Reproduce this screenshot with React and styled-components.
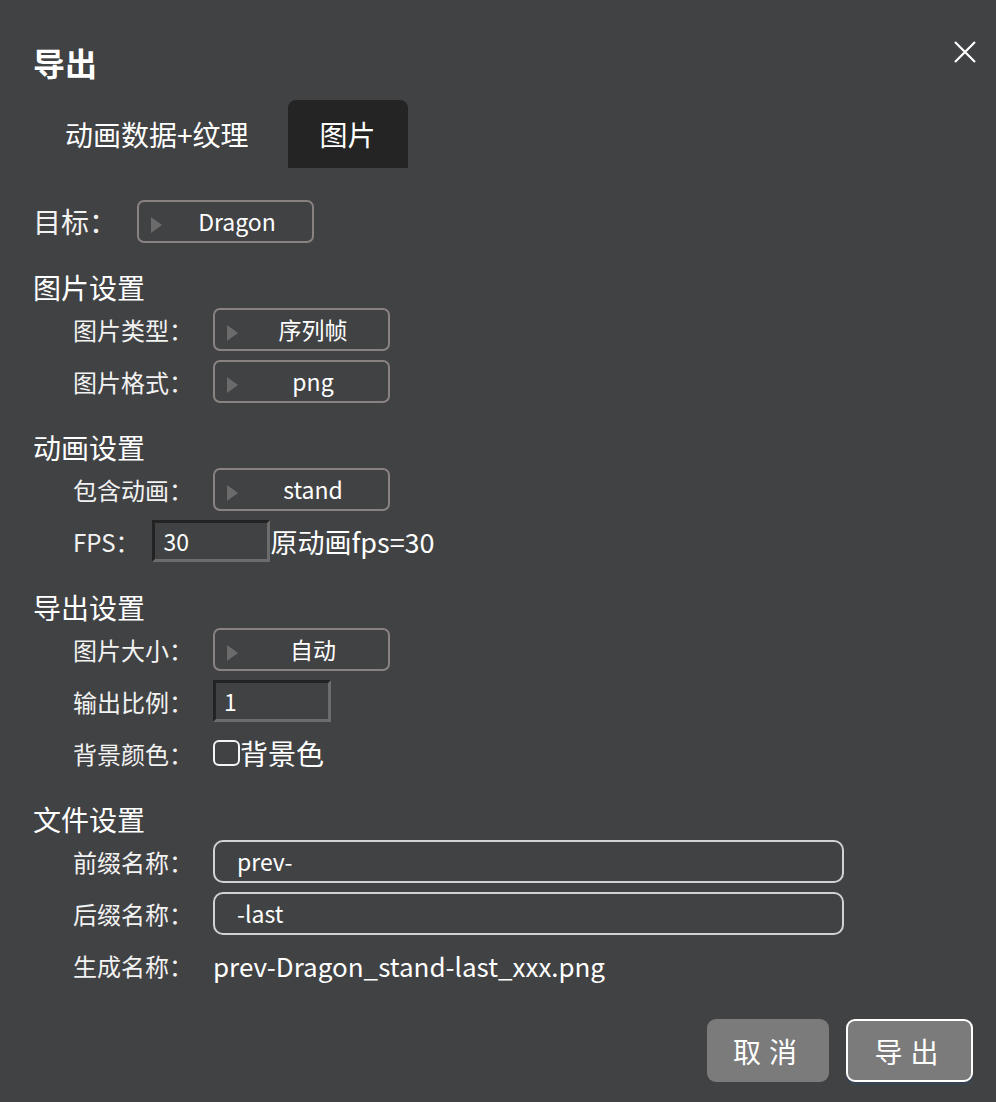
import React from 'react';
import styled, { createGlobalStyle } from 'styled-components';

const GlobalStyle = createGlobalStyle`
  html, body {
    margin: 0;
    padding: 0;
    background: #414244;
  }
  * { box-sizing: border-box; }
`

const font = `"Noto Sans CJK SC", "Noto Sans", sans-serif`

const Dialog = styled.div`
  width: 996px;
  min-height: 1102px;
  background: #414244;
  color: #fff;
  font-family: ${font};
  padding: 40px 19px 0 33px;
`
const TitleBar = styled.div`
  display: flex;
  justify-content: space-between;
  align-items: flex-start;
  height: 44px;
`
const Title = styled.h1`
  margin: 0;
  font-size: 32px;
  font-weight: 700;
  line-height: 44px;
`
const Close = styled.button`
  border: 0;
  background: none;
  padding: 0;
  width: 24px;
  height: 24px;
  cursor: pointer;
`
const Tabs = styled.div`
  display: flex;
  gap: 7px;
  margin-top: 16px;
  height: 68px;
`
const Tab = styled.div`
  display: flex;
  align-items: center;
  padding: 0 32px;
  font-size: 28px;
  border-radius: 8px 8px 0 0;
  background: ${p => (p.$active ? '#242424' : 'transparent')};
`
const Row = styled.div`
  display: flex;
  align-items: center;
  gap: 20px;
  height: 52px;
  padding-left: ${p => (p.$top ? 0 : 40)}px;
  margin-top: ${p => p.$mt || 0}px;
`
const Label = styled.span`
  font-size: ${p => (p.$big ? 28 : 24)}px;
  color: #f2f2f2;
  white-space: nowrap;
  margin-right: ${p => (p.$tight ? -7 : 0)}px;
`
const Section = styled.div`
  margin-top: 24px;
`
const Header = styled.div`
  height: 32px;
  line-height: 32px;
  font-size: 28px;
`
const Select = styled.div`
  width: 177px;
  height: 43px;
  border: 2px solid #8a8282;
  border-radius: 7px;
  display: flex;
  align-items: center;
  padding-left: 12px;
  font-size: 23px;
`
const Arrow = styled.span`
  width: 0;
  height: 0;
  margin-top: 8px;
  border-top: 8px solid transparent;
  border-bottom: 8px solid transparent;
  border-left: 11px solid #6b6b6b;
`
const SelectText = styled.span`
  flex: 1;
  text-align: center;
`
const NumInput = styled.div`
  width: 118px;
  height: 42px;
  border: 3px solid;
  border-color: #232323 #6c6c6c #6c6c6c #232323;
  display: flex;
  align-items: center;
  padding-left: 8px;
  font-size: 23px;
`
const Note = styled.span`
  font-size: 27px;
  margin-left: -20px;
`
const Check = styled.span`
  width: 27px;
  height: 26px;
  border: 2px solid #f4f4f4;
  border-radius: 6px;
`
const CheckText = styled.span`
  font-size: 28px;
  margin-left: -20px;
`
const TextInput = styled.div`
  width: 631px;
  height: 43px;
  border: 2px solid #d2d2d2;
  border-radius: 10px;
  display: flex;
  align-items: center;
  padding-left: 22px;
  font-size: 23px;
`
const NameValue = styled.span`
  font-size: 26px;
`
const Footer = styled.div`
  display: flex;
  justify-content: flex-end;
  gap: 17px;
  margin-top: 28px;
  padding-right: 4px;
`
const Button = styled.button`
  width: ${p => (p.$primary ? 127 : 122)}px;
  height: 63px;
  border-radius: 9px;
  background: #7b7b7b;
  color: #fff;
  font-family: ${font};
  font-size: 28px;
  letter-spacing: 8px;
  padding-left: 8px;
  border: ${p => (p.$primary ? '2px solid #fff' : '0')};
  box-shadow: ${p => (p.$primary ? '0 3px 0 #394452' : 'none')};
  cursor: pointer;
`

const Dropdown = ({ value }) => (
  <Select>
    <Arrow />
    <SelectText>{value}</SelectText>
  </Select>
)

const App = () => {
  return (
    <>
      <GlobalStyle />
      <Dialog>
        <TitleBar>
          <Title>导出</Title>
          <Close aria-label="close">
            <svg width="24" height="24" viewBox="0 0 24 24">
              <path d="M2 2 L22 22 M22 2 L2 22" stroke="#fff" strokeWidth="2.2" />
            </svg>
          </Close>
        </TitleBar>

        <Tabs>
          <Tab>动画数据+纹理</Tab>
          <Tab $active>图片</Tab>
        </Tabs>

        <Row $top $mt={27}>
          <Label $big>目标：</Label>
          <Dropdown value="Dragon" />
        </Row>

        <Section>
          <Header>图片设置</Header>
          <Row>
            <Label>图片类型：</Label>
            <Dropdown value="序列帧" />
          </Row>
          <Row>
            <Label>图片格式：</Label>
            <Dropdown value="png" />
          </Row>
        </Section>

        <Section>
          <Header>动画设置</Header>
          <Row>
            <Label>包含动画：</Label>
            <Dropdown value="stand" />
          </Row>
          <Row>
            <Label $tight>FPS：</Label>
            <NumInput>30</NumInput>
            <Note>原动画fps=30</Note>
          </Row>
        </Section>

        <Section>
          <Header>导出设置</Header>
          <Row>
            <Label>图片大小：</Label>
            <Dropdown value="自动" />
          </Row>
          <Row>
            <Label>输出比例：</Label>
            <NumInput>1</NumInput>
          </Row>
          <Row>
            <Label>背景颜色：</Label>
            <Check />
            <CheckText>背景色</CheckText>
          </Row>
        </Section>

        <Section>
          <Header>文件设置</Header>
          <Row>
            <Label>前缀名称：</Label>
            <TextInput>prev-</TextInput>
          </Row>
          <Row>
            <Label>后缀名称：</Label>
            <TextInput>-last</TextInput>
          </Row>
          <Row>
            <Label>生成名称：</Label>
            <NameValue>prev-Dragon_stand-last_xxx.png</NameValue>
          </Row>
        </Section>

        <Footer>
          <Button>取消</Button>
          <Button $primary>导出</Button>
        </Footer>
      </Dialog>
    </>
  )
}

export default App
